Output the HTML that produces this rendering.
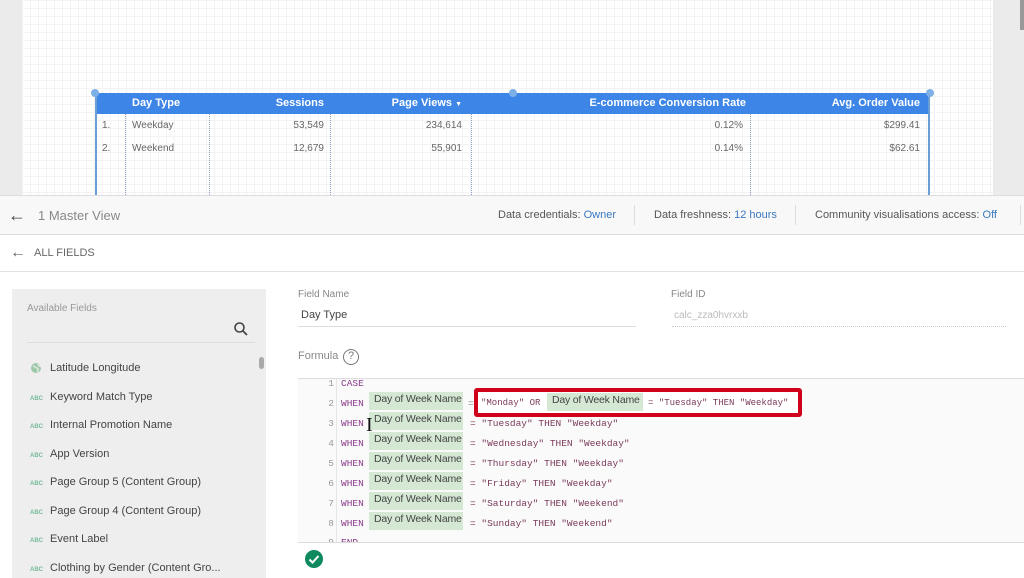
<!DOCTYPE html>
<html><head><meta charset="utf-8"><style>
*{margin:0;padding:0;box-sizing:border-box}
body{width:1024px;height:578px;overflow:hidden;position:relative;font-family:"Liberation Sans",sans-serif;background:#fff;color:#444}
.a{position:absolute;white-space:nowrap}
.grid{background-color:#fff;background-image:linear-gradient(#f3f3f3 1px,transparent 1px),linear-gradient(90deg,#f3f3f3 1px,transparent 1px);background-size:8px 8px}
.th{position:absolute;top:0;height:21px;line-height:21px;color:#fff;font-weight:bold;font-size:11px;text-align:right}
.td{position:absolute;font-size:10px;color:#666;text-align:right}
.vd{position:absolute;top:21px;bottom:0;border-left:1px dotted #8aa0c0}
.ln{position:absolute;left:310px;width:24px;text-align:right;font:9.5px "Liberation Mono",monospace;color:#999}
.kw{position:absolute;left:341px;font:9.5px "Liberation Mono",monospace;color:#8a3a8a}
.chip{position:absolute;left:369px;width:94px;height:18px;background:#d5e8d4;font-size:10.5px;letter-spacing:-0.2px;color:#444;padding:1px 0 0 5px;white-space:nowrap;overflow:hidden}
.code{position:absolute;left:470px;font:9.5px "Liberation Mono",monospace;color:#7a3a5a;white-space:nowrap}
.fl{position:absolute;left:30px;font-size:11px;color:#444}
.fl b{display:inline-block;width:20px;font-size:6px;color:#7b9;font-weight:bold}
</style></head><body>
<div class="a" style="left:0;top:0;width:22px;height:195px;background:#ebebeb"></div>
<div class="a grid" style="left:22px;top:0;width:971px;height:195px"></div>
<div class="a" style="left:993px;top:0;width:31px;height:195px;background:#ebebeb"></div>
<div class="a" style="left:1020px;top:0;width:4px;height:30px;background:#999"></div>
<div class="a" style="left:95px;top:93px;width:835px;height:102px;border-left:2px solid #6a9fd6;border-right:2px solid #6a9fd6">
 <div class="a" style="left:0;top:0;width:831px;height:21px;background:#3d85e6"></div>
 <div class="th" style="left:35px;text-align:left">Day Type</div>
 <div class="th" style="left:115px;width:112px">Sessions</div>
 <div class="th" style="left:235px;width:130px">Page Views <span style="font-size:7px">▼</span></div>
 <div class="th" style="left:376px;width:273px">E-commerce Conversion Rate</div>
 <div class="th" style="left:656px;width:167px">Avg. Order Value</div>
 <div class="vd" style="left:28px"></div><div class="vd" style="left:112px"></div><div class="vd" style="left:233px"></div><div class="vd" style="left:374px"></div><div class="vd" style="left:653px"></div>
 <div class="td" style="left:5px;top:27px">1.</div><div class="td" style="left:35px;top:27px">Weekday</div>
 <div class="td" style="left:115px;width:112px;top:27px">53,549</div><div class="td" style="left:235px;width:130px;top:27px">234,614</div>
 <div class="td" style="left:376px;width:270px;top:27px">0.12%</div><div class="td" style="left:656px;width:167px;top:27px">$299.41</div>
 <div class="td" style="left:5px;top:50px">2.</div><div class="td" style="left:35px;top:50px">Weekend</div>
 <div class="td" style="left:115px;width:112px;top:50px">12,679</div><div class="td" style="left:235px;width:130px;top:50px">55,901</div>
 <div class="td" style="left:376px;width:270px;top:50px">0.14%</div><div class="td" style="left:656px;width:167px;top:50px">$62.61</div>
</div>
<div class="a" style="left:91px;top:89px;width:8px;height:8px;border-radius:50%;background:#7eb0e8"></div>
<div class="a" style="left:509px;top:89px;width:8px;height:8px;border-radius:50%;background:#7eb0e8"></div>
<div class="a" style="left:926px;top:89px;width:8px;height:8px;border-radius:50%;background:#7eb0e8"></div>
<div class="a" style="left:0;top:195px;width:1024px;height:40px;background:#f8f8f8;border-top:1px solid #ddd;border-bottom:1px solid #ddd"></div>
<div class="a" style="left:8px;top:205px;font-size:18px;color:#444">←</div>
<div class="a" style="left:38px;top:208px;font-size:13px;color:#888">1 Master View</div>
<div class="a" style="left:498px;top:209px;font-size:11px;color:#555">Data credentials: <span style="color:#3b78c0">Owner</span></div>
<div class="a" style="left:634px;top:205px;width:1px;height:20px;background:#ddd"></div>
<div class="a" style="left:654px;top:209px;font-size:11px;color:#555">Data freshness: <span style="color:#3b78c0">12 hours</span></div>
<div class="a" style="left:795px;top:205px;width:1px;height:20px;background:#ddd"></div>
<div class="a" style="left:815px;top:209px;font-size:11px;color:#555">Community visualisations access: <span style="color:#3b78c0">Off</span></div>
<div class="a" style="left:1020px;top:205px;width:1px;height:20px;background:#ddd"></div>
<div class="a" style="left:10px;top:244px;font-size:16px;color:#666">←</div>
<div class="a" style="left:34px;top:247px;font-size:11px;color:#666">ALL FIELDS</div>
<div class="a" style="left:0;top:271px;width:1024px;height:1px;background:#e2e2e2"></div>
<div class="a" style="left:12px;top:289px;width:254px;height:289px;background:#eeeeee"></div>
<div class="a" style="left:27px;top:303px;font-size:10px;color:#999">Available Fields</div>
<svg class="a" style="left:233px;top:321px" width="16" height="16"><circle cx="6.5" cy="6.5" r="4.5" fill="none" stroke="#444" stroke-width="1.6"/><line x1="10" y1="10" x2="14" y2="14" stroke="#444" stroke-width="1.8"/></svg>
<div class="a" style="left:27px;top:342px;width:228px;height:1px;background:#ddd"></div>
<div class="a" style="left:259px;top:357px;width:5px;height:12px;border-radius:3px;background:#aaa"></div>
<svg class="a" style="left:30px;top:362px" width="12" height="12"><circle cx="6" cy="6" r="5" fill="#9fc8a8"/><path d="M3 4c2 0 2 2 4 2s1 3 0 4M8 2c0 2 2 2 3 3" fill="none" stroke="#eee" stroke-width="1.2"/></svg>
<div class="fl" style="top:362px;left:50px">Latitude Longitude</div>
<div class="fl" style="top:391px"><b>ABC</b>Keyword Match Type</div>
<div class="fl" style="top:419px"><b>ABC</b>Internal Promotion Name</div>
<div class="fl" style="top:448px"><b>ABC</b>App Version</div>
<div class="fl" style="top:476px"><b>ABC</b>Page Group 5 (Content Group)</div>
<div class="fl" style="top:505px"><b>ABC</b>Page Group 4 (Content Group)</div>
<div class="fl" style="top:533px"><b>ABC</b>Event Label</div>
<div class="fl" style="top:562px"><b>ABC</b>Clothing by Gender (Content Gro...</div>
<div class="a" style="left:298px;top:289px;font-size:10px;color:#888">Field Name</div>
<div class="a" style="left:301px;top:309px;font-size:11px;color:#444">Day Type</div>
<div class="a" style="left:298px;top:326px;width:338px;height:1px;background:#ddd"></div>
<div class="a" style="left:671px;top:289px;font-size:10px;color:#888">Field ID</div>
<div class="a" style="left:674px;top:310px;font-size:10px;color:#bbb">calc_zza0hvrxxb</div>
<div class="a" style="left:672px;top:326px;width:334px;border-top:1px dotted #ccc"></div>
<div class="a" style="left:298px;top:350px;font-size:11px;color:#888">Formula</div>
<div class="a" style="left:343px;top:349px;width:16px;height:16px;border:1.5px solid #777;border-radius:50%;font-size:11px;color:#777;text-align:center;line-height:13px">?</div>
<div class="a" style="left:298px;top:378px;width:726px;height:165px;background:#fafafa;border-top:1px solid #ddd;border-bottom:1px solid #ddd"></div>
<div class="a" style="left:336px;top:379px;width:1px;height:163px;background:#e6e6e6"></div>
<div class="ln" style="top:378px">1</div><div class="kw" style="top:378px">CASE</div>
<div class="ln" style="top:398px">2</div><div class="kw" style="top:398px">WHEN</div><div class="chip" style="top:392px">Day of Week Name</div>
<div class="ln" style="top:418px">3</div><div class="kw" style="top:418px">WHEN</div><div class="chip" style="top:412px">Day of Week Name</div><div class="code" style="top:418px">= "Tuesday" THEN "Weekday"</div>
<div class="ln" style="top:438px">4</div><div class="kw" style="top:438px">WHEN</div><div class="chip" style="top:432px">Day of Week Name</div><div class="code" style="top:438px">= "Wednesday" THEN "Weekday"</div>
<div class="ln" style="top:458px">5</div><div class="kw" style="top:458px">WHEN</div><div class="chip" style="top:452px">Day of Week Name</div><div class="code" style="top:458px">= "Thursday" THEN "Weekday"</div>
<div class="ln" style="top:478px">6</div><div class="kw" style="top:478px">WHEN</div><div class="chip" style="top:472px">Day of Week Name</div><div class="code" style="top:478px">= "Friday" THEN "Weekday"</div>
<div class="ln" style="top:498px">7</div><div class="kw" style="top:498px">WHEN</div><div class="chip" style="top:492px">Day of Week Name</div><div class="code" style="top:498px">= "Saturday" THEN "Weekend"</div>
<div class="ln" style="top:518px">8</div><div class="kw" style="top:518px">WHEN</div><div class="chip" style="top:512px">Day of Week Name</div><div class="code" style="top:518px">= "Sunday" THEN "Weekend"</div>
<div class="ln" style="top:537px;height:5px;overflow:hidden">9</div><div class="kw" style="top:537px;height:5px;overflow:hidden">END</div>
<div class="a" style="left:468px;top:398px;font:9.5px 'Liberation Mono',monospace;color:#888">=</div>
<div class="a" style="left:474px;top:388px;width:328px;height:29px;border:4px solid #d0021b;border-radius:3px;background:#fff"></div>
<div class="code" style="left:481px;top:398px;font-size:9px">"Monday" OR</div>
<div class="chip" style="left:547px;top:393px;width:96px">Day of Week Name</div>
<div class="code" style="left:648px;top:398px;font-size:9px">= "Tuesday" THEN "Weekday"</div>
<div class="a" style="left:366px;top:414px;font-size:20px;color:#111;font-family:'Liberation Serif',serif">I</div>
<svg class="a" style="left:305px;top:550px" width="18" height="18"><circle cx="9" cy="9" r="9" fill="#0f8a5f"/><path d="M4.5 9.5l3 3 6-6.5" fill="none" stroke="#fff" stroke-width="2"/></svg>
</body></html>
